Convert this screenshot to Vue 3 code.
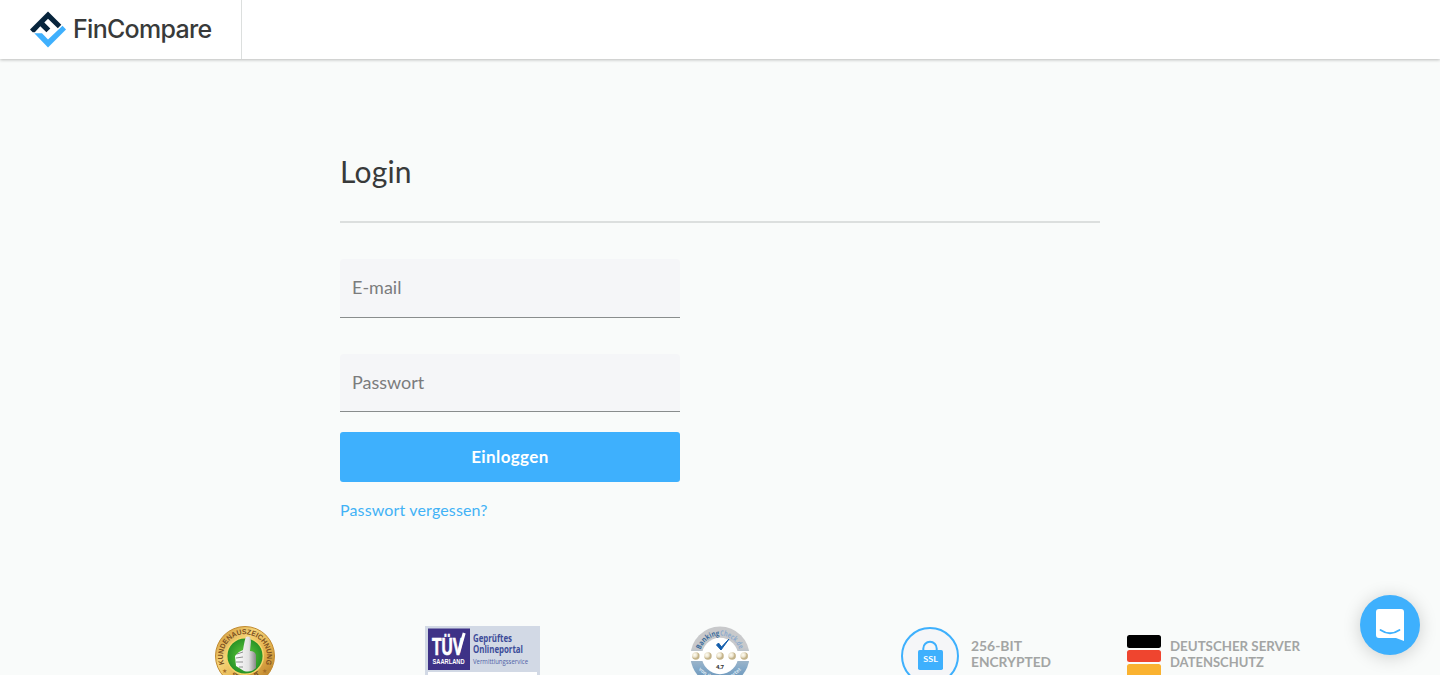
<script setup>
const stars = [14, 43, 72, 101, 130]
</script>

<template>
  <div class="page">
    <header class="header">
      <a class="brand">
        <svg class="logo" width="36" height="37" viewBox="0 0 36 37">
          <path fill="#07243c" d="M0 18.5 18 .5 31.3 13.8 27.8 17.3 18 7.7 14.3 11.4 20.3 17.4 16.4 21.3 10.3 15.3 4.8 21.2H2.7z" />
          <path fill="#3fb0fd" d="M32.5 14.8 36 18.5 18 36.5 4.3 22.2H12L18 28.6z" />
        </svg>
        <span class="brand-name">FinCompare</span>
      </a>
    </header>

    <main class="content">
      <h1><span>Login</span></h1>
      <form class="form" @submit.prevent>
        <input class="field" type="email" placeholder="E-mail" aria-label="E-mail" />
        <input class="field password" type="password" placeholder="Passwort" aria-label="Passwort" />
        <button class="submit">Einloggen</button>
        <a class="forgot">Passwort vergessen?</a>
      </form>
    </main>

    <footer class="trust">
      <svg class="award" width="60" height="60" viewBox="0 0 60 60">
        <defs>
          <linearGradient id="gold" x1="0" y1="0" x2="1" y2="1">
            <stop offset="0" stop-color="#c88b2a" /><stop offset=".35" stop-color="#f5d478" />
            <stop offset=".65" stop-color="#e2ae4a" /><stop offset="1" stop-color="#a86d1e" />
          </linearGradient>
          <radialGradient id="green"><stop offset="0" stop-color="#65cd3c" /><stop offset="1" stop-color="#259126" /></radialGradient>
          <linearGradient id="hand"><stop offset="0" stop-color="#fff" /><stop offset=".65" stop-color="#e2e2e2" /><stop offset="1" stop-color="#888" /></linearGradient>
          <path id="awardArc" d="M9.8 39A22 22 0 1 1 50.2 39" />
          <path id="awardBottom" d="M10 44Q30 67 50 44" />
        </defs>
        <circle cx="30" cy="30" r="29.5" fill="url(#gold)" stroke="#c18a30" />
        <circle cx="30" cy="30" r="18.3" fill="url(#green)" stroke="#f5d36b" stroke-width="1.5" />
        <path d="M28 24Q30 12 31 11Q36 9 36 16L35 25Q40 25 41 29V42Q36 47 29 45L21 40 20 30 24 26z" fill="url(#hand)" />
        <path d="M28 26 22 28M28 31 21 32M28 36 21 36M28 41 24 41" stroke="#777" stroke-width=".8" />
        <text class="award-text"><textPath href="#awardArc" startOffset="1" textLength="85" lengthAdjust="spacingAndGlyphs">KUNDENAUSZEICHNUNG</textPath></text>
        <text class="award-star" x="7" y="47">★</text><text class="award-star" x="47" y="47">★</text>
        <text class="award-text"><textPath href="#awardBottom" startOffset="8" textLength="33">SEHR GUT</textPath></text>
      </svg>

      <svg class="tuv" width="115" height="60" viewBox="0 0 115 60">
        <path fill="#d2d9e5" d="M0 0H115V60H0z" />
        <path fill="#fff" d="M3 46H112V60H3z" />
        <path fill="#3e3287" d="M3 2.5H45V44H3z" />
        <text class="tuv-name" x="7" y="29" textLength="31" lengthAdjust="spacingAndGlyphs">TÜV</text>
        <path d="M33.5 27 39.2 7" fill="none" stroke="#fff" stroke-width="3" />
        <text class="tuv-place" x="7.5" y="38.2" textLength="32" lengthAdjust="spacingAndGlyphs">SAARLAND</text>
        <text class="tuv-title" x="48" y="15.5" textLength="39" lengthAdjust="spacingAndGlyphs">Geprüftes</text>
        <text class="tuv-title" x="48" y="26.8" textLength="50" lengthAdjust="spacingAndGlyphs">Onlineportal</text>
        <text class="tuv-copy" x="48" y="38" textLength="55" lengthAdjust="spacingAndGlyphs">Vermittlungsservice</text>
      </svg>

      <svg class="banking" width="60" height="60" viewBox="0 0 60 60">
        <defs>
          <linearGradient id="bank" x1="0" y1="0" x2="0" y2="1"><stop offset=".35" stop-color="#c8c9cb" /><stop offset=".7" stop-color="#86aac8" /><stop offset="1" stop-color="#5989b2" /></linearGradient>
          <radialGradient id="pearl" cx=".35" cy=".35"><stop offset="0" stop-color="#fffdf4" /><stop offset=".6" stop-color="#ebe3cd" /><stop offset="1" stop-color="#c4b38a" /></radialGradient>
          <path id="bankArc" d="M10.6 23.7A20.4 20.4 0 0 1 49.4 23.7" />
          <path id="bankBottom" d="M7 42Q30 67 53 42" />
        </defs>
        <circle cx="30" cy="30" r="29.5" fill="url(#bank)" />
        <circle cx="30" cy="30" r="18.2" fill="#fff" />
        <path d="M0 25H60V35H0z" fill="#fff" />
        <g transform="scale(.417)"><circle v-for="x in stars" :key="x" :cx="x" cy="72" r="9" fill="url(#pearl)" /></g>
        <path d="M26.5 19 31 24 39 13 31.5 21 28.5 17z" fill="#145eac" stroke="#145eac" />
        <text class="bank-title" fill="#3b6c9c"><textPath href="#bankArc" textLength="25" lengthAdjust="spacingAndGlyphs">Banking</textPath></text>
        <text class="bank-title" fill="#8ba9cd"><textPath href="#bankArc" startOffset="25.5" textLength="25" lengthAdjust="spacingAndGlyphs">Check.de</textPath></text>
        <text class="rating" x="26" y="42.5" textLength="8">4,7</text>
        <text class="bank-bottom"><textPath href="#bankBottom" startOffset="2">von Ihnen bewertet</textPath></text>
      </svg>

      <div class="security">
        <svg width="58" height="58" viewBox="0 0 58 58">
          <circle cx="29" cy="29" r="28" fill="#f5f6f8" stroke="#3eb0fd" stroke-width="2" />
          <path d="M22.3 24V21.5a6.7 6.7 0 0 1 13.4 0V24" fill="none" stroke="#3eb0fd" stroke-width="2" />
          <rect x="17" y="23" width="25" height="20" rx="1.7" fill="#3eb0fd" />
          <text class="ssl" x="22.3" y="35.3" textLength="14.5" lengthAdjust="spacingAndGlyphs">SSL</text>
        </svg>
        <svg class="caption" width="82" height="36">
          <text x="0" y="16" textLength="51" lengthAdjust="spacingAndGlyphs">256-BIT</text>
          <text x="0" y="32" textLength="80" lengthAdjust="spacingAndGlyphs">ENCRYPTED</text>
        </svg>
      </div>

      <div class="server">
        <div class="flag"><i></i><i></i><i></i></div>
        <svg class="caption" width="132" height="36">
          <text x="0" y="16" textLength="130" lengthAdjust="spacingAndGlyphs">DEUTSCHER SERVER</text>
          <text x="0" y="32" textLength="94" lengthAdjust="spacingAndGlyphs">DATENSCHUTZ</text>
        </svg>
      </div>
    </footer>

    <button class="chat" aria-label="Chat">
      <svg width="28" height="32" viewBox="0 0 28 32">
        <path fill="#fff" d="M3 0H25Q28 0 28 3V32L20 29H3Q0 29 0 26V3Q0 0 3 0z" />
        <path d="M4.5 21Q14 27.5 23.5 21" fill="none" stroke="#3eb0fd" stroke-width="1.8" stroke-linecap="round" />
      </svg>
    </button>
  </div>
</template>

<style>
body { overflow: hidden; }
</style>

<style scoped>
.page { height: 675px; overflow: hidden; background: #f9fbfa; color: #383a3a; font-family: Lato, "Liberation Sans", sans-serif; }
.header { height: 59px; background: #fff; box-shadow: 0 1px 3px rgba(0, 0, 0, .25); position: relative; }
.brand { box-sizing: border-box; display: flex; align-items: flex-start; width: 242px; height: 59px; padding: 11px 0 0 30px; border-right: 1px solid #dcdfde; }
.brand-name { margin-left: 7px; font: 500 25px/36px Inter, sans-serif; letter-spacing: -.7px; }
.content { width: 760px; margin: 0 auto; padding-top: 93px; height: 474px; box-sizing: border-box; }
h1 { box-sizing: border-box; height: 71px; margin: 0; border-bottom: 2px solid #dcdfde; font-size: 30px; line-height: 38px; font-weight: 400; letter-spacing: .2px; }
.form { display: flex; flex-direction: column; width: 340px; padding-top: 36px; }
.field { box-sizing: border-box; height: 59px; padding: 0 12px 3px; border: 0; border-bottom: 1px solid #898d8d; border-radius: 4px 4px 0 0; background: #f5f6f8; font: 18px Lato, sans-serif; outline: 0; }
.field::placeholder { color: #7b7c7d; opacity: 1; }
.password { height: 58px; margin-top: 36px; padding-bottom: 2px; }
.submit { height: 50px; margin-top: 20px; padding: 0 0 2px; border: 0; border-radius: 3px; background: #3eb0fd; color: #fff; font: 700 17px Lato, sans-serif; letter-spacing: .4px; }
.forgot { margin-top: 18px; color: #42b2f6; font-size: 16px; line-height: 20px; letter-spacing: .15px; }
.trust { display: flex; align-items: flex-start; margin-top: 93px; padding-left: 215px; }
.tuv { margin-left: 150px; }
.banking { margin-left: 150px; }
.security { display: flex; margin: 1px 0 0 151px; gap: 12px; }
.server { display: flex; margin: 1px 0 0 74px; gap: 9px; }
.caption { margin-top: 8px; overflow: visible; fill: #a3a5a4; font: 700 13.5px Lato, sans-serif; }
.flag { display: grid; gap: 2px; width: 34px; margin-top: 8px; }
.flag i { height: 12.5px; border-radius: 2.5px; background: #000; }
.flag i:nth-child(2) { background: #ef452f; }
.flag i:nth-child(3) { background: #fab230; }
.award-text { font: 700 7.3px "Liberation Sans", sans-serif; fill: #7a4f20; }
.award-star { font: 6px "DejaVu Sans", sans-serif; fill: #a66e25; }
.tuv-name { font: 700 23px "Liberation Sans", sans-serif; fill: #fff; stroke: #fff; stroke-width: .7px; }
.tuv-place { font: 700 8px "Liberation Sans", sans-serif; fill: #fff; }
.tuv-title { font: 700 10px "Open Sans", sans-serif; fill: #3c4c99; }
.tuv-copy { font: 7.5px "Open Sans", sans-serif; fill: #5062a6; }
.bank-title { font: 700 7.5px "Open Sans", sans-serif; }
.rating { font: 700 6px "Open Sans", sans-serif; fill: #333; }
.bank-bottom { font: 700 5px "Open Sans", sans-serif; fill: #dce9f3; }
.ssl { font: 700 7.5px Lato, sans-serif; fill: #fff; }
.chat { position: absolute; top: 595px; left: 1360px; display: grid; place-items: center; width: 60px; height: 60px; padding: 0; border: 0; border-radius: 50%; background: #3eb0fd; box-shadow: 0 2px 18px rgba(0, 0, 0, .18); }
</style>
